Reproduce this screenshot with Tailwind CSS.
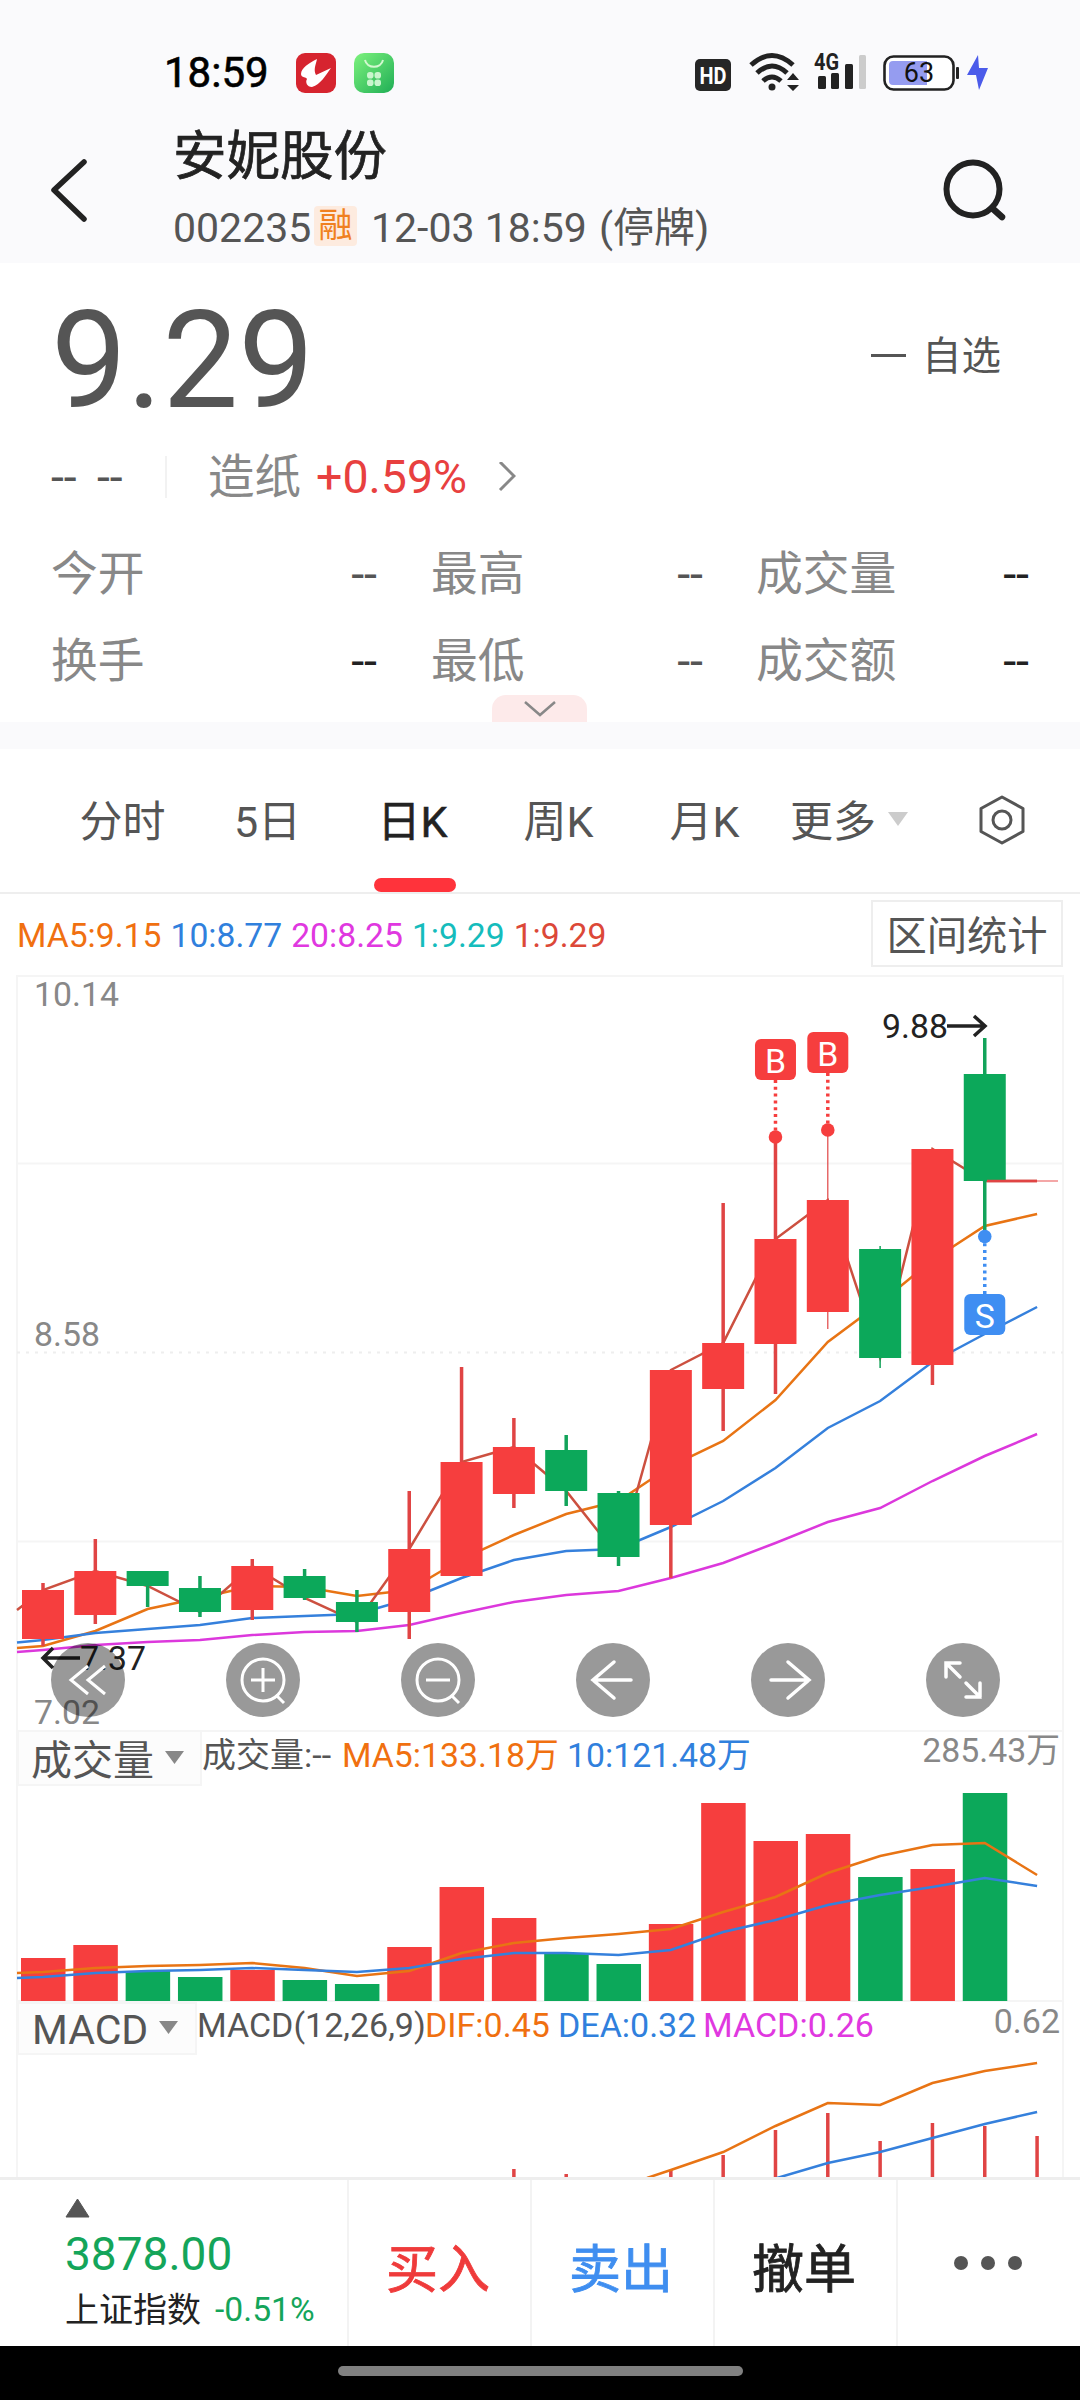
<!DOCTYPE html>
<html lang="zh-CN">
<head>
    <meta charset="UTF-8">
    <meta name="viewport" content="width=device-width, initial-scale=1.0">
    <title>安妮股份 002235</title>
    <script src="https://cdn.jsdelivr.net/npm/@tailwindcss/browser@4"></script>
</head>
<body class="font-[Roboto,'Noto_Sans_CJK_SC',sans-serif] bg-white text-[#555] w-[1080px] h-[2400px] overflow-hidden flex flex-col">
    <!-- Header -->
    <header class="bg-[#fafafc] h-[263px] shrink-0">
        <div class="h-[110px] pt-[35px] pl-[164px] pr-[90px] flex items-center">
            <span class="text-[42px] leading-[56px] text-black [-webkit-text-stroke:0.6px] w-[132px]">18:59</span>
            <svg class="w-10 h-10" viewBox="0 0 40 40">
                <rect width="40" height="40" rx="9" fill="#d6242f"/>
                <path d="M21 6 C13 10 5 15 5 21 C5 25 11 24 11 26 C9 29 11 34 16 34 C25 31 29 23 35 15 C30 17 25 20 20 22 C17 17 20 11 21 6Z" fill="#fff"/>
            </svg>
            <svg class="w-10 h-10 ml-[18px]" viewBox="0 0 40 40">
                <defs>
                    <linearGradient id="store" x1="0" y1="0" x2="1" y2="1">
                        <stop offset="0" stop-color="#7df27d"/>
                        <stop offset="1" stop-color="#1fae55"/>
                    </linearGradient>
                </defs>
                <rect width="40" height="40" rx="10" fill="url(#store)"/>
                <path d="M11 7 C13 16 27 16 29 7" fill="none" stroke="#d3f8d0" stroke-width="2"/>
                <g fill="#c9f5cd">
                    <rect x="13" y="19" width="6.500" height="6.500" rx="2.800"/>
                    <rect x="20.500" y="19" width="6.500" height="6.500" rx="2.800"/>
                    <rect x="13" y="26.500" width="6.500" height="6.500" rx="2.800"/>
                    <rect x="20.500" y="26.500" width="6.500" height="6.500" rx="2.800"/>
                </g>
            </svg>
            <div class="ml-auto flex items-center">
                <svg class="w-[300px] h-[44px]" viewBox="690 51 300 44">
                    <rect x="695" y="59" width="36" height="32" rx="5" fill="#262626"/>
                    <text x="713" y="84" text-anchor="middle" font-size="24" font-weight="700" fill="#fff" textLength="27" lengthAdjust="spacingAndGlyphs">HD</text>
                    <g fill="none" stroke="#222" stroke-width="5">
                        <path d="M751 65 Q772 46 793 65"/>
                        <path d="M757 73 Q772 59 787 73"/>
                        <path d="M763 81 Q772 73 781 81"/>
                    </g>
                    <circle cx="772" cy="87" r="3.500" fill="#222"/>
                    <path d="M787 80 L793 73 L799 80Z M787 85 L793 91 L799 85Z" fill="#222"/>
                    <text x="814" y="70" font-size="23" font-weight="700" fill="#222" textLength="25" lengthAdjust="spacingAndGlyphs">4G</text>
                    <rect x="818" y="76" width="8" height="13" rx="1.500" fill="#222"/>
                    <rect x="831" y="73" width="8" height="16" rx="1.500" fill="#222"/>
                    <rect x="845" y="64" width="8" height="25" rx="1.500" fill="#222"/>
                    <rect x="859" y="55" width="7" height="34" rx="1.500" fill="#ccc"/>
                    <rect x="884.500" y="56.500" width="69" height="33" rx="9" fill="#fff" stroke="#222" stroke-width="2.600"/>
                    <path d="M893 61 H927 V85 H893 Q889 85 889 81 V65 Q889 61 893 61Z" fill="#959cf0"/>
                    <rect x="956" y="67" width="3" height="12" rx="1" fill="#222"/>
                    <text x="919" y="82" text-anchor="middle" font-size="27" fill="#111">63</text>
                    <path d="M978 55 L967 75 H976 L979 90 L988 68 H979Z" fill="#4b5bea"/>
                </svg>
            </div>
        </div>
        <div class="h-[153px] flex">
            <svg class="w-[173px] h-[153px]" viewBox="0 110 173 153">
                <path d="M84 162 L54 190 L84 219" fill="none" stroke="#222" stroke-width="5.500" stroke-linecap="round" stroke-linejoin="round"/>
            </svg>
            <div class="flex-1 pt-[9px]">
                <h1 class="text-[53.5px] leading-[76px] [-webkit-text-stroke:0.7px] text-[#222]">安妮股份</h1>
                <div class="flex items-center mt-[3px] text-[41px] leading-[60px] whitespace-nowrap">
                    <span class="w-[141px]">002235</span>
                    <span class="w-[43px] h-[40px] -mt-1 rounded bg-[#fdebdf] text-[#f08020] text-[34px] leading-[38px] text-center">融</span>
                    <span class="ml-[14px] w-[228px]">12-03 18:59</span>
                    <span class="text-[41px]">(停牌)</span>
                </div>
            </div>
            <svg class="w-[160px] h-[153px]" viewBox="920 110 160 153">
                <circle cx="973" cy="189" r="26.500" fill="none" stroke="#222" stroke-width="6"/>
                <path d="M992 208 L1002 217" stroke="#222" stroke-width="6.500" stroke-linecap="round"/>
            </svg>
        </div>
    </header>

    <!-- Quote -->
    <section class="h-[459px] shrink-0 relative">
        <div class="flex justify-between pl-[51px] pr-[79px] h-[181px]">
            <div class="text-[135px] leading-[160px] pt-[18px]">9.29</div>
            <div class="flex items-center h-[76px] mt-[56px] text-[39.5px]">
                <span class="w-[35px] h-[3px] bg-[#555] mr-[16px] -mt-[4px]"></span>自选
            </div>
        </div>
        <div class="h-[66px] pl-[51px] flex items-center text-[46.5px] leading-[66px]">
            <span class="w-[46px]">--</span>
            <span class="w-[68px]">--</span>
            <span class="w-[2px] h-[42px] bg-[#f2f2f2]"></span>
            <span class="ml-[41px] w-[108px] text-[#888]">造纸</span>
            <span class="text-[#e8403f] w-[182px]">+0.59%</span>
            <svg class="w-[18px] h-[30px]" viewBox="0 0 18 30"><path d="M2 0 L16 14 L2 28" fill="none" stroke="#888" stroke-width="3"/></svg>
        </div>
        <div class="pt-[21px] pl-[51px] pr-[51px] text-[46.8px] leading-[87px] text-[#888]">
            <div class="flex">
                <div class="w-[326px] flex justify-between">今开<span class="text-[#555]">--</span></div>
                <div class="w-[272px] ml-[54px] flex justify-between">最高<span class="text-[#555]">--</span></div>
                <div class="w-[273px] ml-[53px] flex justify-between">成交量<span class="text-[#222]">--</span></div>
            </div>
            <div class="flex">
                <div class="w-[326px] flex justify-between">换手<span class="text-[#222]">--</span></div>
                <div class="w-[272px] ml-[54px] flex justify-between">最低<span class="text-[#555]">--</span></div>
                <div class="w-[273px] ml-[53px] flex justify-between">成交额<span class="text-[#222]">--</span></div>
            </div>
        </div>
        <div class="absolute bottom-0 left-[492px] w-[95px] h-[27px] rounded-t-[14px] bg-[#fdeaea] flex justify-center items-center">
            <svg class="w-[34px] h-[18px]" viewBox="0 0 34 18"><path d="M2 2 L17 15 L32 2" fill="none" stroke="#888" stroke-width="2.500"/></svg>
        </div>
    </section>
    <div class="h-[27px] shrink-0 bg-[#fafafc]"></div>

    <!-- Period tabs -->
    <nav class="h-[145px] shrink-0 border-b-2 border-[#eee] pl-[50px] flex text-[43px] leading-[146px] text-center">
        <span class="w-[145px]">分时</span>
        <span class="w-[145px]">5日</span>
        <span class="w-[145px] text-[#222] [-webkit-text-stroke:0.5px] relative">日K<i class="absolute left-[34px] bottom-0 w-[82px] h-[14px] rounded-[7px] bg-[#ff333b]"></i></span>
        <span class="w-[147px]">周K</span>
        <span class="w-[145px]">月K</span>
        <span class="ml-[13px]">更多</span>
        <svg class="w-[20px] h-[14px] mt-[63px] ml-[12px]" viewBox="0 0 20 14"><path d="M0 0H20L10 14Z" fill="#ccc"/></svg>
        <svg class="w-[50px] h-[54px] mt-[44px] ml-[69px]" viewBox="0 0 50 54">
            <path d="M25 4 L46 15.500 V38.500 L25 50 L4 38.500 V15.500Z" fill="none" stroke="#555" stroke-width="3" stroke-linejoin="round"/>
            <circle cx="25" cy="27" r="9" fill="none" stroke="#555" stroke-width="3"/>
        </svg>
    </nav>

    <!-- Charts -->
    <main class="h-[1283px] shrink-0 relative overflow-hidden">
        <div class="h-[81px] pl-[17px] pr-[17px] flex justify-between items-start text-[33.7px]">
            <div class="flex gap-[9px] leading-[83px] whitespace-nowrap">
                <span class="text-[#f07010]">MA5:9.15</span>
                <span class="text-[#3080dd]">10:8.77</span>
                <span class="text-[#e038e0]">20:8.25</span>
                <span class="text-[#15bcbc]">1:9.29</span>
                <span class="text-[#dc4838]">1:9.29</span>
            </div>
            <div class="w-[192px] h-[67px] mt-[6px] border-2 border-[#eee] text-[40.3px] leading-[70px] text-center whitespace-nowrap">区间统计</div>
        </div>
        <!-- price -->
        <svg id="price" class="block w-[1080px] h-[757px]" viewBox="0 975 1080 757"></svg>
        <!-- volume -->
        <div class="h-[270px] relative">
            <svg id="volume" class="absolute inset-0 w-[1080px] h-[270px]" viewBox="0 1732 1080 270"></svg>
            <div class="relative pl-[17px] pr-[20px] flex items-start text-[34px] whitespace-nowrap">
                <div class="w-[185px] h-[54px] pt-[7px] border-2 border-t-0 border-[#f5f5f5] bg-[#fcfcfc] pl-[12px] flex items-center text-[41px]">成交量
                    <svg class="w-[19px] h-[13px] ml-[11px] -mt-[8px]" viewBox="0 0 19 13"><path d="M0 0H19L9.500 13Z" fill="#888"/></svg>
                </div>
                <span class="leading-[47px] w-[140px]">成交量:--</span>
                <span class="leading-[47px] w-[225px] text-[#f07010] text-[33.8px]">MA5:133.18万</span>
                <span class="leading-[47px] text-[#3080dd] text-[33.8px]">10:121.48万</span>
                <span class="leading-[38px] ml-auto text-[#888] text-[33.8px]">285.43万</span>
            </div>
        </div>
        <!-- macd -->
        <div class="h-[175px] relative">
            <svg id="macd" class="absolute inset-0 w-[1080px] h-[175px]" viewBox="0 2002 1080 175"></svg>
            <div class="relative pl-[17px] pr-[20px] flex items-start text-[34px] whitespace-nowrap">
                <div class="w-[180px] h-[53px] pt-[5px] border-2 border-[#f5f5f5] bg-[#fcfcfc] pl-[13px] flex items-center text-[41px]">MACD
                    <svg class="w-[19px] h-[13px] ml-[11px] -mt-[7px]" viewBox="0 0 19 13"><path d="M0 0H19L9.500 13Z" fill="#888"/></svg>
                </div>
                <span class="leading-[46px] w-[228px]">MACD(12,26,9)</span>
                <span class="leading-[46px] w-[133px] text-[#f07010]">DIF:0.45</span>
                <span class="leading-[46px] w-[145px] text-[#3080dd]">DEA:0.32</span>
                <span class="leading-[46px] text-[#e038e0]">MACD:0.26</span>
                <span class="leading-[38px] ml-auto text-[#888]">0.62</span>
            </div>
        </div>
        <!-- chart controls -->
        <div class="absolute left-[51px] top-[749px] flex gap-[101px]">
            <svg class="w-[74px] h-[74px]" viewBox="0 0 74 74"><circle cx="37" cy="37" r="37" fill="#000" fill-opacity=".4"/><path d="M37 23 L20 37 L37 51 M54 23 L37 37 L54 51" fill="none" stroke="#fff" stroke-width="3"/></svg>
            <svg class="w-[74px] h-[74px]" viewBox="0 0 74 74"><circle cx="37" cy="37" r="37" fill="#000" fill-opacity=".4"/><path d="M25 37 H49 M37 25 V49 M50 52 L58 60" fill="none" stroke="#fff" stroke-width="3"/><circle cx="37" cy="37" r="21" fill="none" stroke="#fff" stroke-width="3"/></svg>
            <svg class="w-[74px] h-[74px]" viewBox="0 0 74 74"><circle cx="37" cy="37" r="37" fill="#000" fill-opacity=".4"/><path d="M25 37 H49 M50 52 L58 60" fill="none" stroke="#fff" stroke-width="3"/><circle cx="37" cy="37" r="21" fill="none" stroke="#fff" stroke-width="3"/></svg>
            <svg class="w-[74px] h-[74px]" viewBox="0 0 74 74"><circle cx="37" cy="37" r="37" fill="#000" fill-opacity=".4"/><path d="M38 19 L17 37 L38 55 M17 37 H55" fill="none" stroke="#fff" stroke-width="3.500" stroke-linecap="round"/></svg>
            <svg class="w-[74px] h-[74px]" viewBox="0 0 74 74"><circle cx="37" cy="37" r="37" fill="#000" fill-opacity=".4"/><path d="M37 19 L58 37 L37 55 M58 37 H20" fill="none" stroke="#fff" stroke-width="3.500" stroke-linecap="round"/></svg>
            <svg class="w-[74px] h-[74px]" viewBox="0 0 74 74"><circle cx="37" cy="37" r="37" fill="#000" fill-opacity=".4"/><path d="M34 20 H20 V34 M20 20 L34 34 M40 40 L54 54 M54 40 V54 H40" fill="none" stroke="#fff" stroke-width="3.500" stroke-linecap="round"/></svg>
        </div>
    </main>

    <!-- Trade bar -->
    <footer class="h-[169px] shrink-0 border-t-3 border-[#eee] flex text-[52px] leading-[181px] text-center bg-white">
        <div class="w-[347px] pl-[65px] pt-[18px] text-left">
            <svg class="w-[25px] h-[20px]" viewBox="0 0 25 20"><path d="M12.500 1 L24 19 H1Z" fill="#555" stroke="#555" stroke-linejoin="round"/></svg>
            <div class="text-[46px] leading-[54px] mt-[9px] text-[#14a55a]">3878.00</div>
            <div class="text-[34px] leading-[50px] mt-[4px] text-[#222] flex gap-[14px]">上证指数<span class="text-[#14a55a] text-[33.7px]">-0.51%</span></div>
        </div>
        <div class="w-[183px] pr-[3px] border-l-2 border-[#f3f3f3] text-[#ef3b3b] [-webkit-text-stroke:0.8px]">买入</div>
        <div class="w-[183px] pr-[3px] border-l-2 border-[#f3f3f3] text-[#3f8ef0] [-webkit-text-stroke:0.8px]">卖出</div>
        <div class="w-[183px] pr-[3px] border-l-2 border-[#f3f3f3] text-[#222] [-webkit-text-stroke:0.8px]">撤单</div>
        <div class="w-[184px] border-l-2 border-[#f3f3f3] flex justify-center gap-[13px] pt-[76px] pr-[2px]">
            <i class="w-[14px] h-[14px] rounded-full bg-[#555]"></i>
            <i class="w-[14px] h-[14px] rounded-full bg-[#555]"></i>
            <i class="w-[14px] h-[14px] rounded-full bg-[#555]"></i>
        </div>
    </footer>
    <div class="h-[54px] shrink-0 bg-black flex justify-center pt-[20px]">
        <div class="w-[405px] h-[10px] rounded-full bg-[#808080]"></div>
    </div>

    <script>
        var RED = '#f63e3e', GREEN = '#0ca85a', ORANGE = '#e87414', BLUE = '#3580dc', PINK = '#dc38dc', CLOSE = '#cc5040';
        // position of the nth trading day
        function cx(i) { return 43 + i * 52.32; }
        function rect(x, y, w, h, fill) {
            return '<rect x="' + x + '" y="' + y + '" width="' + w + '" height="' + h + '" fill="' + fill + '"/>';
        }
        function line(x1, y1, x2, y2, color, w, dash) {
            return '<path d="M' + x1 + ' ' + y1 + 'L' + x2 + ' ' + y2 + '" stroke="' + color + '" stroke-width="' + w + '" stroke-dasharray="' + (dash || 'none') + '"/>';
        }
        // first value sits on the left frame, the others on the days from start
        function series(left, ys, color, start, leftX) {
            var pts = [(leftX || 17) + ',' + left];
            ys.forEach(function (y, i) { pts.push(cx(i + (start || 0)) + ',' + y); });
            return '<polyline fill="none" stroke="' + color + '" stroke-width="2.500" points="' + pts.join(' ') + '"/>';
        }
        function text(x, y, s, fill, anchor) {
            return '<text x="' + x + '" y="' + y + '" font-size="33.800" fill="' + fill + '" text-anchor="' + (anchor || 'start') + '">' + s + '</text>';
        }
        function frame(top, bottom) {
            return line(17, top, 17, bottom, '#f5f5f5', 2) + line(1063, top, 1063, bottom, '#f5f5f5', 2);
        }

        // [up, high, body top, body bottom, low, wick width]
        var candles = [
            [1, 1583, 1590, 1639, 1646], [1, 1539, 1571, 1615, 1624], [0, 1571, 1571, 1586, 1607],
            [0, 1576, 1588, 1612, 1617], [1, 1559, 1566, 1610, 1620], [0, 1569, 1576, 1598, 1600],
            [0, 1590, 1602, 1622, 1632], [1, 1491, 1549, 1612, 1639], [1, 1367, 1462, 1576, 1576],
            [1, 1418, 1447, 1494, 1508], [0, 1435, 1450, 1491, 1506], [0, 1491, 1493, 1557, 1566],
            [1, 1370, 1370, 1525, 1578], [1, 1203, 1343, 1389, 1431], [1, 1137, 1239, 1344, 1394],
            [1, 1130, 1200, 1312, 1329, 1.2], [0, 1246, 1249, 1358, 1368, 1.5], [1, 1149, 1149, 1365, 1385],
            [0, 1038, 1074, 1181, 1236]
        ];
        var out = frame(975, 1732);
        [976, 1163.5, 1541.5, 1731].forEach(function (y) { out += line(17, y, 1063, y, '#f5f5f5', 2); });
        out += line(17, 1352.5, 1063, 1352.5, '#eee', 2, '3 6');
        out += text(34, 1006, '10.14', '#888') + text(34, 1346, '8.58', '#888') + text(34, 1724, '7.02', '#888');
        out += series(1648, [1646, 1631, 1609, 1598, 1586, 1587, 1596, 1590, 1559, 1535, 1514, 1501, 1466, 1441, 1400, 1342, 1303, 1260, 1226, 1214], ORANGE);
        out += series(1642.5, [1640, 1633, 1629, 1625, 1618, 1616, 1614, 1599, 1578, 1560, 1551, 1549, 1527, 1501, 1468, 1428, 1401, 1362, 1334, 1307], BLUE);
        out += series(1652, [1650, 1645, 1642, 1640, 1635, 1632, 1631, 1625, 1613, 1602, 1595, 1591, 1578, 1563, 1543, 1522, 1508, 1481, 1456, 1434], PINK);
        out += series(1610, [1590, 1571, 1586, 1612, 1566, 1598, 1622, 1549, 1462, 1447, 1491, 1557, 1370, 1343, 1239, 1200, 1358, 1149, 1181, 1181], CLOSE);
        candles.forEach(function (c, i) {
            var color = c[0] ? RED : GREEN;
            out += line(cx(i), c[1], cx(i), c[4], c[0] ? '#e04444' : '#12a35a', c[5] || 3.5);
            out += rect(cx(i) - 21, c[2], 42, c[3] - c[2], color);
        });
        out += line(987, 1181, 1037, 1181, '#e04444', 2.5) + line(1037, 1181, 1058, 1181, '#f08a8a', 1.5);
        // trade marks: [day, dot y, badge top, letter, colour]
        [[14, 1137, 1039, 'B', RED], [15, 1130, 1032, 'B', RED], [18, 1236.5, 1294, 'S', '#3f8ef2']].forEach(function (m) {
            out += line(cx(m[0]), m[3] === 'B' ? m[2] + 41 : m[1], cx(m[0]), m[3] === 'B' ? m[1] : m[2], m[4], 3.5, '3 3.8');
            out += '<circle cx="' + cx(m[0]) + '" cy="' + m[1] + '" r="6.800" fill="' + m[4] + '"/>';
            out += '<rect x="' + (cx(m[0]) - 20.5) + '" y="' + m[2] + '" width="41" height="41" rx="6" fill="' + m[4] + '"/>';
            out += text(cx(m[0]), m[2] + 33.5, m[3], '#fff', 'middle');
        });
        out += text(948, 1038, '9.88', '#222', 'end') + '<path d="M947 1026H984M974 1016L985 1026L974 1036" fill="none" stroke="#222" stroke-width="3.500"/>';
        out += text(80, 1670, '7.37', '#222') + '<path d="M80 1658H44M53 1648L43 1658L53 1668" fill="none" stroke="#222" stroke-width="3.500"/>';
        document.getElementById('price').innerHTML = out;

        var volumes = [1958, 1945, 1971, 1977, 1970, 1980, 1984, 1947, 1887, 1918, 1954, 1964, 1924, 1803, 1841, 1834, 1877, 1869, 1793];
        out = frame(1732, 2002) + line(17, 2001, 1063, 2001, '#f5f5f5', 2);
        volumes.forEach(function (y, i) { out += rect(cx(i) - 22, y, 44.5, 2001 - y, candles[i][0] ? RED : GREEN); });
        out += series(1973, [1972, 1968, 1966, 1965, 1963, 1968, 1976, 1971, 1953, 1943, 1938, 1934, 1929, 1912, 1897, 1873, 1856, 1845, 1843, 1875], ORANGE);
        out += series(1978, [1977, 1973, 1971, 1970, 1968, 1970, 1972, 1968, 1959, 1953, 1953, 1955, 1950, 1932, 1920, 1905, 1895, 1887, 1878, 1886], BLUE);
        document.getElementById('volume').innerHTML = out;

        out = frame(2002, 2177);
        [2169, 2174, 2177, 2170, 2155, 2130, 2113, 2141, 2123, 2126, 2136].forEach(function (y, i) {
            out += rect(cx(i + 9) - 1.75, y, 3.5, 2177 - y, '#e04444');
        });
        out += series(2178, [2170, 2152, 2126, 2103, 2105, 2083, 2071, 2063], ORANGE, 12, 647);
        out += series(2178, [2163, 2152, 2138, 2124, 2112], BLUE, 15, 777);
        document.getElementById('macd').innerHTML = out;
    </script>
</body>
</html>
